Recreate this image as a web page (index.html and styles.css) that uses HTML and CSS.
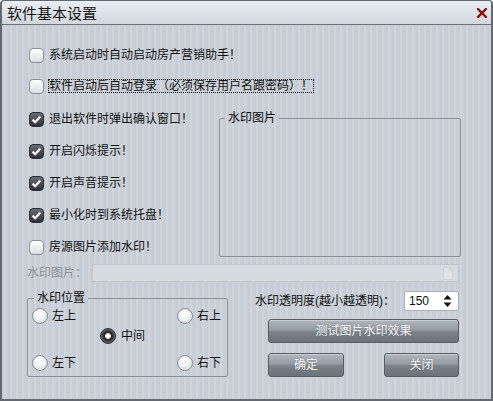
FILE: index.html
```html
<!DOCTYPE html>
<html lang="zh-CN">
<head>
<meta charset="utf-8">
<title>软件基本设置</title>
<link rel="stylesheet" href="styles.css">
</head>
<body>
<div class="window">
  <div class="titlebar">
    <span class="title">软件基本设置</span>
    <span class="close" aria-label="关闭">
      <svg width="10" height="10" viewBox="0 0 10 10"><path d="M1 1 L9 9 M9 1 L1 9" stroke="#8e0c0c" stroke-width="2.4" stroke-linecap="square" fill="none"/></svg>
    </span>
  </div>
  <div class="content">
    <div class="checks top">
      <label class="check"><span class="box"></span><span class="txt">系统启动时自动启动房产营销助手！</span></label>
      <label class="check"><span class="box"></span><span class="txt focus">软件启动后自动登录（必须保存用户名跟密码）！</span></label>
    </div>
    <div class="middle">
      <div class="checks left">
        <label class="check"><span class="box on"><svg width="15" height="15" viewBox="0 0 15 15"><path d="M3.6 7.6 L6.2 10.2 L11.4 4.6" stroke="#fff" stroke-width="2.2" fill="none"/></svg></span><span class="txt">退出软件时弹出确认窗口！</span></label>
        <label class="check"><span class="box on"><svg width="15" height="15" viewBox="0 0 15 15"><path d="M3.6 7.6 L6.2 10.2 L11.4 4.6" stroke="#fff" stroke-width="2.2" fill="none"/></svg></span><span class="txt">开启闪烁提示！</span></label>
        <label class="check"><span class="box on"><svg width="15" height="15" viewBox="0 0 15 15"><path d="M3.6 7.6 L6.2 10.2 L11.4 4.6" stroke="#fff" stroke-width="2.2" fill="none"/></svg></span><span class="txt">开启声音提示！</span></label>
        <label class="check"><span class="box on"><svg width="15" height="15" viewBox="0 0 15 15"><path d="M3.6 7.6 L6.2 10.2 L11.4 4.6" stroke="#fff" stroke-width="2.2" fill="none"/></svg></span><span class="txt">最小化时到系统托盘！</span></label>
        <label class="check"><span class="box"></span><span class="txt">房源图片添加水印！</span></label>
      </div>
      <fieldset class="group picgroup">
        <legend>水印图片</legend>
        <div class="picarea"></div>
      </fieldset>
    </div>
    <div class="fileRow">
      <span class="fileLabel">水印图片：</span>
      <div class="fileInput">
        <svg class="fileIcon" width="10" height="13" viewBox="0 0 10 13"><path d="M0.5 0.5 H6.5 L9.5 3.5 V12.5 H0.5 Z" fill="#dfe3e7" stroke="#cdd2d7"/><path d="M6.5 0.5 V3.5 H9.5" fill="none" stroke="#cdd2d7"/></svg>
      </div>
    </div>
    <div class="bottom">
      <fieldset class="group posgroup">
        <legend>水印位置</legend>
        <div class="radios">
          <label class="radio r-tl"><span class="dot"></span>左上</label>
          <label class="radio r-tr"><span class="dot"></span>右上</label>
          <label class="radio r-c"><span class="dot on"></span>中间</label>
          <label class="radio r-bl"><span class="dot"></span>左下</label>
          <label class="radio r-br"><span class="dot"></span>右下</label>
        </div>
      </fieldset>
      <div class="rightcol">
        <div class="alphaRow">
          <span class="alphaLabel">水印透明度(越小越透明)：</span>
          <div class="spin">
            <span class="spinVal">150</span>
            <svg class="spinArrows" width="9" height="14" viewBox="0 0 9 14"><path d="M0.5 5.5 L4.5 1 L8.5 5.5 Z M0.5 8.5 L4.5 13 L8.5 8.5 Z" fill="#111"/></svg>
          </div>
        </div>
        <button class="btn wide">测试图片水印效果</button>
        <div class="btnRow">
          <button class="btn ok">确定</button>
          <button class="btn cancel">关闭</button>
        </div>
      </div>
    </div>
  </div>
</div>
</body>
</html>
```
FILE: styles.css
```css
html, body {
  margin: 0;
  padding: 0;
  background: #ffffff;
}
body {
  font-family: "Liberation Sans", "Noto Sans CJK SC", sans-serif;
  font-size: 12px;
  color: #111;
}
.window {
  width: 493px;
  height: 401px;
  box-sizing: border-box;
  border: 2px solid #626973;
  border-top-width: 1px;
  border-radius: 4px 4px 0 0;
  overflow: hidden;
  background: repeating-linear-gradient(90deg, #c7cdd5 0px, #c7cdd5 2px, #d0d5dc 2px, #d0d5dc 4px, #c9cfd7 4px, #c9cfd7 6px);
  display: flex;
  flex-direction: column;
}
.titlebar {
  height: 23px;
  border-bottom: 1px solid #6b727b;
  background: linear-gradient(#e9eef2, #d2d8dd);
  display: flex;
  align-items: center;
  justify-content: space-between;
  padding: 0 4px 0 5px;
}
.title {
  font-family: "Noto Sans CJK SC", sans-serif;
  font-size: 15px;
  line-height: 23px;
  color: #151515;
}
.close {
  display: flex;
  width: 10px;
  height: 10px;
  margin-right: 0;
  margin-top: 1px;
}
.content {
  padding: 22px 30px 0 25px;
  display: flex;
  flex-direction: column;
}
.checks {
  display: flex;
  flex-direction: column;
}
.checks.top {
  padding-left: 2px;
  gap: 15px;
}
.check {
  display: flex;
  align-items: center;
  height: 16px;
  line-height: 16px;
  white-space: nowrap;
}
.box {
  width: 15px;
  height: 15px;
  box-sizing: border-box;
  border: 1px solid #8b9096;
  border-radius: 4px;
  background: linear-gradient(#ffffff, #dcdee1);
  margin-right: 5px;
  flex: none;
  display: flex;
  align-items: center;
  justify-content: center;
}
.box.on {
  border-color: #2d2f33;
  background: linear-gradient(#6a6d72, #2e3034);
}
.box.on svg {
  margin: -1px;
}
.txt.focus {
  outline: 1px dotted #111;
  outline-offset: -1px;
  line-height: 14px;
  padding: 0 1px;
  margin-left: -1px;
}
.middle {
  display: flex;
  margin-top: 17px;
  padding-left: 2px;
}
.checks.left {
  width: 190px;
  gap: 16px;
}
.group {
  margin: 0;
  padding: 0;
  border: 1px solid #8a9098;
  border-radius: 2px;
  min-width: 0;
}
.group legend {
  padding: 0 3px;
  margin-left: 5px;
  line-height: 14px;
  font-size: 12px;
}
.picgroup {
  flex: 1;
}
.picarea {
  height: 131px;
}
.fileRow {
  display: flex;
  align-items: center;
  margin-top: 7px;
  margin-right: 2px;
  height: 18px;
}
.fileLabel {
  width: 65px;
  color: #8b9198;
  line-height: 18px;
  flex: none;
}
.fileInput {
  flex: 1;
  height: 18px;
  box-sizing: border-box;
  border: 1px solid #c1c6cc;
  border-radius: 2px;
  background: #d6dbe0;
  display: flex;
  align-items: center;
  justify-content: flex-end;
  padding-right: 5px;
}
.bottom {
  display: flex;
  margin-top: 9px;
}
.posgroup {
  width: 201px;
  box-sizing: border-box;
  flex: none;
}
.posgroup legend {
  margin-left: 6px;
  padding: 0 3px;
}
.radios {
  display: grid;
  grid-template-columns: 68px 77px auto;
  grid-template-rows: 20px 27px 16px;
  padding: 3px 0 5px 4px;
}
.radio {
  display: flex;
  align-items: center;
  height: 16px;
  line-height: 16px;
  white-space: nowrap;
}
.r-tl { grid-column: 1; grid-row: 1; }
.r-tr { grid-column: 3; grid-row: 1; }
.r-c  { grid-column: 2; grid-row: 2; }
.r-bl { grid-column: 1; grid-row: 3; }
.r-br { grid-column: 3; grid-row: 3; }
.dot {
  width: 16px;
  height: 16px;
  box-sizing: border-box;
  border-radius: 50%;
  border: 1px solid #8a8e94;
  background: radial-gradient(circle at 45% 35%, #ffffff 0%, #f2f3f4 40%, #cfd2d5 100%);
  margin-right: 4px;
  flex: none;
}
.dot.on {
  border-color: #2b2d30;
  background: radial-gradient(circle, #ffffff 0px, #ffffff 2.5px, #1e2022 3.2px, #3a3c40 5px, #6b6e73 7.5px);
  margin-right: 5px;
}
.rightcol {
  margin-left: auto;
  margin-right: 2px;
  width: 204px;
  display: flex;
  flex-direction: column;
  align-items: flex-end;
}
.alphaRow {
  display: flex;
  align-items: center;
  gap: 9px;
  height: 20px;
  align-self: stretch;
  justify-content: flex-end;
}
.alphaLabel {
  line-height: 20px;
  white-space: nowrap;
}
.spin {
  width: 60px;
  height: 20px;
  box-sizing: border-box;
  border: 1px solid #a9b0b8;
  border-radius: 2px;
  background: #ffffff;
  display: flex;
  align-items: center;
  justify-content: space-between;
  padding: 0 6px 0 4px;
}
.spinVal {
  font-size: 12px;
  line-height: 18px;
  color: #0d0d1a;
}
.btn {
  font-family: "Liberation Sans", "Noto Sans CJK SC", sans-serif;
  font-size: 12px;
  color: #ffffff;
  height: 24px;
  box-sizing: border-box;
  border: 1px solid #585e66;
  border-radius: 3px;
  background: linear-gradient(#b1b7be 0%, #959ba3 45%, #7b8189 55%, #6c727a 100%);
  box-shadow: inset 0 1px 0 rgba(255,255,255,0.35);
  text-shadow: 0 0 1px rgba(40,44,50,0.6);
  padding: 0;
  line-height: 22px;
}
.btn.wide {
  width: 191px;
  margin-top: 8px;
}
.btnRow {
  width: 191px;
  display: flex;
  justify-content: space-between;
  margin-top: 10px;
}
.btn.ok {
  width: 76px;
}
.btn.cancel {
  width: 75px;
}
```
